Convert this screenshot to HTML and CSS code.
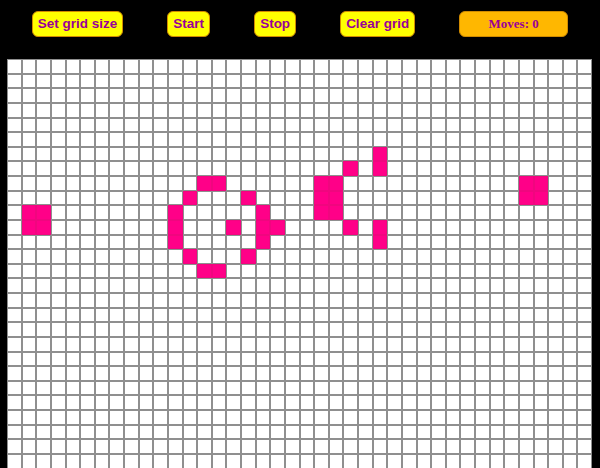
FILE: index.html
```html
<!DOCTYPE html>
<html>
<head>
<meta charset="utf-8">
<title>Game of Life</title>
<link rel="stylesheet" href="styles.css">
</head>
<body>
<div class="toolbar">
  <button class="btn">Set grid size</button>
  <button class="btn">Start</button>
  <button class="btn">Stop</button>
  <button class="btn">Clear grid</button>
  <div class="moves">Moves: 0</div>
</div>
<div class="grid" id="grid"></div>
<script src="script.js"></script>
</body>
</html>
```
FILE: styles.css
```css
html, body {
  margin: 0;
  padding: 0;
  background: #000;
  overflow: hidden;
}
.toolbar {
  display: flex;
  justify-content: center;
  align-items: center;
  gap: 44px;
  padding-top: 11px;
  height: 26px;
}
.btn {
  box-sizing: border-box;
  height: 26px;
  padding: 0 5px;
  margin: 0;
  background: #ffff00;
  color: #990099;
  border: 1px solid #d08a00;
  border-radius: 6px;
  font-family: "Liberation Sans", Arial, sans-serif;
  font-weight: bold;
  font-size: 13.5px;
  line-height: 24px;
  white-space: nowrap;
  cursor: pointer;
}
.moves {
  box-sizing: border-box;
  width: 109px;
  height: 26px;
  background: #ffb700;
  color: #990099;
  border: 1px solid #d08a00;
  border-radius: 6px;
  font-family: "Liberation Serif", "Times New Roman", serif;
  font-weight: bold;
  font-size: 13px;
  line-height: 24px;
  text-align: center;
  white-space: nowrap;
}
.grid {
  margin: 22px 0 0 7px;
  width: 585px;
  display: grid;
  grid-template-columns: repeat(40, 1fr);
  grid-auto-rows: 14.625px;
  background: #fff;
}
.cell {
  box-sizing: border-box;
  border: 1px solid #8f8f8f;
  background: #fff;
}
.cell.alive {
  background: #ff0088;
  border-color: #f0067f;
}
```
FILE: script.js
```js
var alive = [
  [1,10],[2,10],[1,11],[2,11],
  [13,8],[14,8],[12,9],[16,9],[11,10],[17,10],[11,11],[15,11],[17,11],[18,11],
  [11,12],[17,12],[12,13],[16,13],[13,14],[14,14],
  [25,6],[23,7],[25,7],[21,8],[22,8],[21,9],[22,9],[21,10],[22,10],[23,11],[25,11],[25,12],
  [35,8],[36,8],[35,9],[36,9]
];
var set = {};
alive.forEach(function (p) { set[p[0] + ',' + p[1]] = true; });
var grid = document.getElementById('grid');
for (var r = 0; r < 40; r++) {
  for (var c = 0; c < 40; c++) {
    var d = document.createElement('div');
    d.className = 'cell' + (set[c + ',' + r] ? ' alive' : '');
    grid.appendChild(d);
  }
}
```
